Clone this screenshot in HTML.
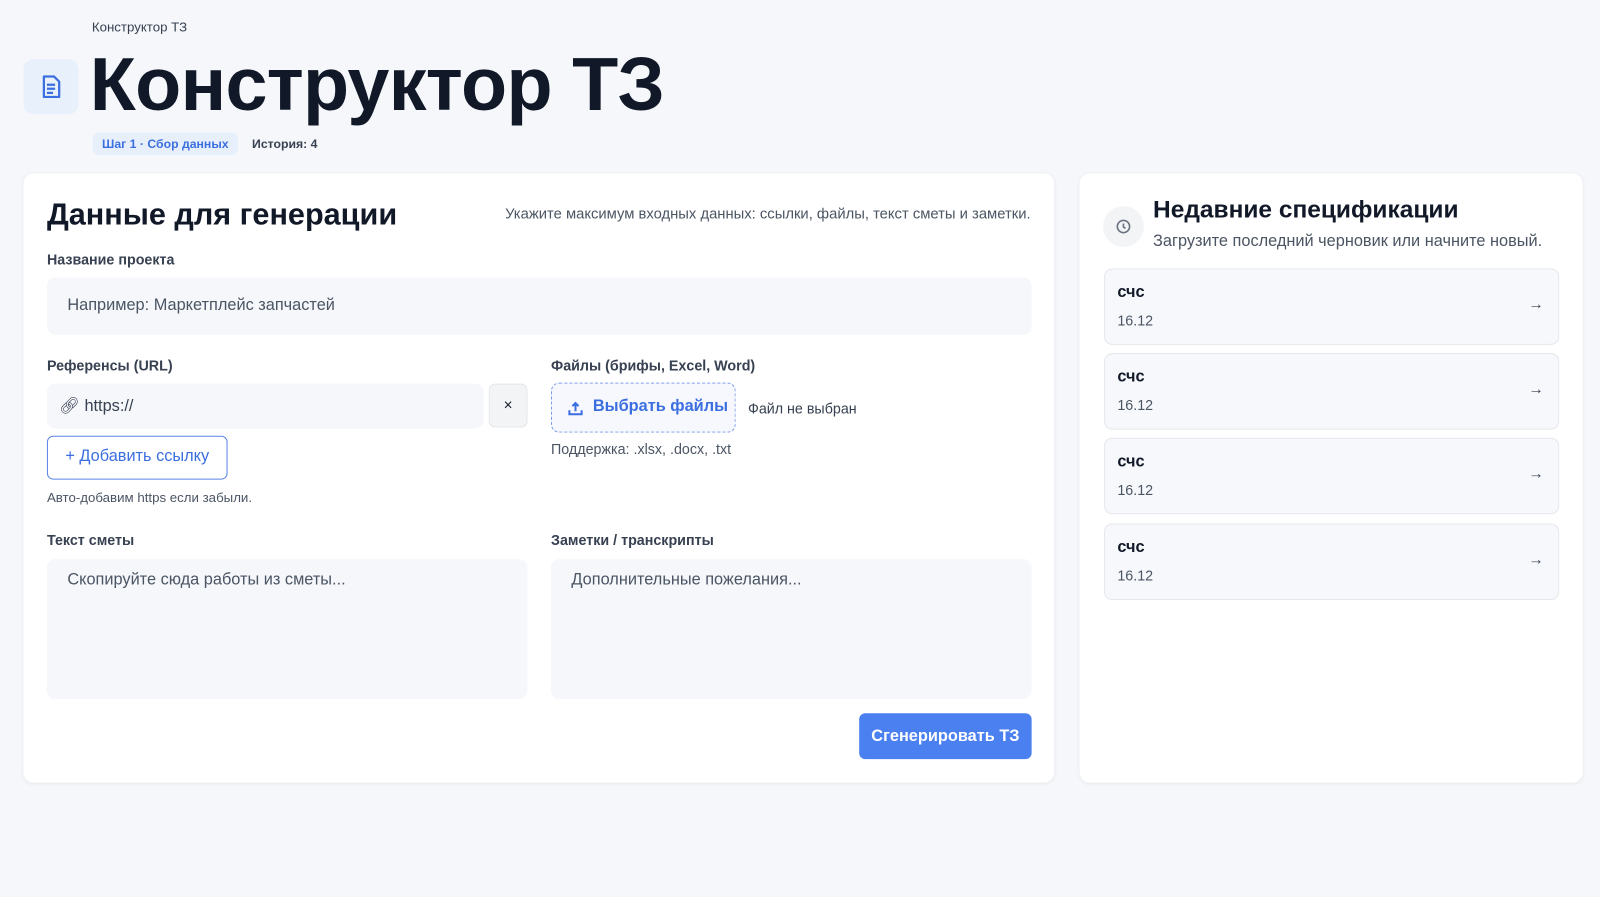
<!DOCTYPE html>
<html><head><meta charset="utf-8"><style>
*{box-sizing:border-box;margin:0;padding:0}
html,body{width:1600px;height:897px;background:#f5f7fb;overflow:hidden}
body{font-family:"Liberation Sans",sans-serif;color:#111827;position:relative}
#w{position:absolute;left:0;top:0;width:1568px;height:879px;transform:scale(1.0204);transform-origin:0 0}
.a{position:absolute}
.card{position:absolute;background:#fff;border-radius:10px;box-shadow:0 1px 4px rgba(0,0,0,.06)}
.lbl{position:absolute;font-size:14px;font-weight:bold;color:#374151}
.inp{position:absolute;background:#f5f7fb;border-radius:8px;font-size:16px;color:#4b5563}
.item{position:absolute;left:24px;width:446px;height:75px;background:#f6f8fb;border:1px solid #e5e7eb;border-radius:8px}
.item b{position:absolute;left:12px;top:14px;font-size:16px}
.item span{position:absolute;left:12px;top:42px;font-size:14px;color:#4b5563}
.item i{position:absolute;right:14px;top:26px;font-style:normal;font-size:15px;color:#374151}
</style></head><body><div id="w">
<div class="a" style="left:90px;top:19px;font-size:13px;color:#374151">Конструктор ТЗ</div>
<div class="a" style="left:23px;top:58px;width:54px;height:54px;background:#e8f0fc;border-radius:10px">
<svg width="54" height="54" viewBox="0 0 54 54"><path d="M20 17h10l5 5v15h-15z M23 25h8 M23 29h8 M23 33h6" fill="none" stroke="#3b6fe0" stroke-width="2.2" stroke-linejoin="round"/></svg></div>
<div class="a" style="left:88px;top:40px;font-size:74px;font-weight:bold;letter-spacing:-0.7px;color:#111827">Конструктор ТЗ</div>
<div class="a" style="left:91px;top:130px;height:22px;padding:0 9px;line-height:22px;background:#e7effb;border-radius:6px;font-size:12px;font-weight:bold;color:#3b6fe0">Шаг 1 · Сбор данных</div>
<div class="a" style="left:247px;top:134px;font-size:12px;font-weight:bold;color:#374151">История: 4</div>

<div class="card" style="left:23px;top:170px;width:1010px;height:597px">
<div class="a" style="left:23px;top:24px;font-size:30px;font-weight:bold">Данные для генерации</div>
<div class="a" style="right:23px;top:32px;font-size:14.5px;color:#4b5563">Укажите максимум входных данных: ссылки, файлы, текст сметы и заметки.</div>
<div class="lbl" style="left:23px;top:76px">Название проекта</div>
<div class="inp" style="left:23px;top:102px;width:965px;height:56px;padding:19px 20px">Например: Маркетплейс запчастей</div>
<div class="lbl" style="left:23px;top:180px">Референсы (URL)</div>
<div class="inp" style="left:23px;top:206px;width:428px;height:44px;padding:12px 12px;color:#374151">🔗︎ https://</div>
<div class="a" style="left:456px;top:206px;width:38px;height:43px;background:#f3f4f6;border:1px solid #e5e7eb;border-radius:6px;text-align:center;line-height:41px;font-size:15px">×</div>
<div class="a" style="left:23px;top:257px;width:177px;height:43px;border:1.5px solid #5b84e6;border-radius:6px;text-align:center;line-height:40px;font-size:16px;color:#3b6fe0">+ Добавить ссылку</div>
<div class="a" style="left:23px;top:310px;font-size:13px;color:#4b5563">Авто-добавим https если забыли.</div>
<div class="lbl" style="left:517px;top:180px">Файлы (брифы, Excel, Word)</div>
<div class="a" style="left:517px;top:205px;width:181px;height:49px;border:1.5px dashed #7b9be8;border-radius:8px;background:#f6f8fd;line-height:46px;font-size:16px;font-weight:bold;color:#3b6fe0;padding-left:40px">Выбрать файлы
<svg class="a" style="left:15px;top:16px" width="16" height="16" viewBox="0 0 16 16"><path d="M8 11V3M5 6l3-3 3 3M2 10v4h12v-4" fill="none" stroke="#3b6fe0" stroke-width="2"/></svg></div>
<div class="a" style="left:710px;top:222px;font-size:14px;color:#374151">Файл не выбран</div>
<div class="a" style="left:517px;top:262px;font-size:14px;color:#4b5563">Поддержка: .xlsx, .docx, .txt</div>
<div class="lbl" style="left:23px;top:351px">Текст сметы</div>
<div class="inp" style="left:23px;top:378px;width:471px;height:137px;padding:12px 20px">Скопируйте сюда работы из сметы...</div>
<div class="lbl" style="left:517px;top:351px">Заметки / транскрипты</div>
<div class="inp" style="left:517px;top:378px;width:471px;height:137px;padding:12px 20px">Дополнительные пожелания...</div>
<div class="a" style="left:819px;top:529px;width:169px;height:45px;background:#4a80f0;border-radius:6px;color:#fff;font-weight:bold;font-size:16px;text-align:center;line-height:45px">Сгенерировать ТЗ</div>
</div>

<div class="card" style="left:1058px;top:170px;width:493px;height:597px">
<div class="a" style="left:23px;top:32px;width:40px;height:40px;border-radius:50%;background:#f3f4f6">
<svg width="40" height="40" viewBox="0 0 40 40"><circle cx="20" cy="20" r="6" fill="none" stroke="#6b7280" stroke-width="1.6"/><path d="M20 17v3.5l2 1.2" fill="none" stroke="#6b7280" stroke-width="1.6"/></svg></div>
<div class="a" style="left:72px;top:22px;font-size:24px;font-weight:bold">Недавние спецификации</div>
<div class="a" style="left:72px;top:58px;font-size:16px;color:#4b5563">Загрузите последний черновик или начните новый.</div>
<div class="item" style="top:93px"><b>счс</b><span>16.12</span><i>→</i></div>
<div class="item" style="top:176px"><b>счс</b><span>16.12</span><i>→</i></div>
<div class="item" style="top:259px"><b>счс</b><span>16.12</span><i>→</i></div>
<div class="item" style="top:343px"><b>счс</b><span>16.12</span><i>→</i></div>
</div>
</div></body></html>
